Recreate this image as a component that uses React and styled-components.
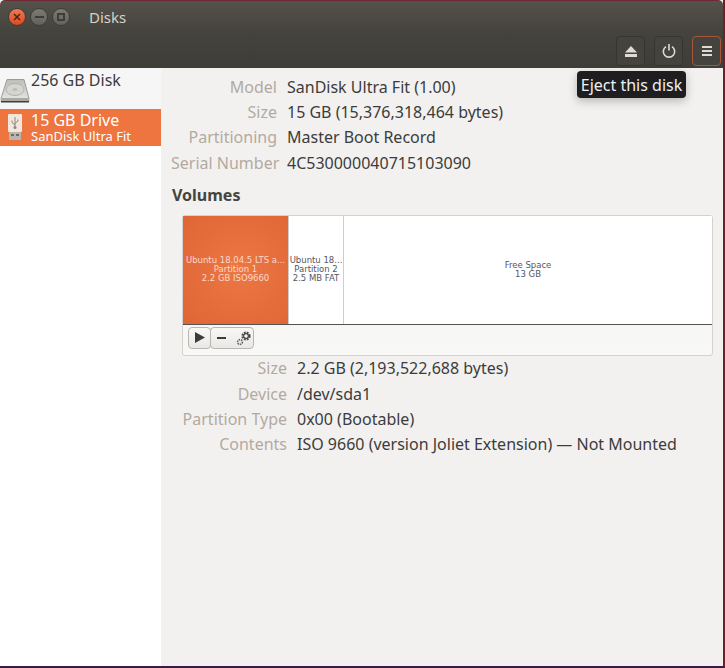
import styled, { createGlobalStyle } from 'styled-components';

const GlobalStyle = createGlobalStyle`
  html, body {
    margin: 0;
    padding: 0;
    background: #fff;
  }
  * {
    box-sizing: border-box;
  }
`;

const driveInfo = [
  ['Model', 'SanDisk Ultra Fit (1.00)'],
  ['Size', '15 GB (15,376,318,464 bytes)'],
  ['Partitioning', 'Master Boot Record'],
  ['Serial Number', '4C530000040715103090'],
];

const volumeInfo = [
  ['Size', '2.2 GB (2,193,522,688 bytes)'],
  ['Device', '/dev/sda1'],
  ['Partition Type', '0x00 (Bootable)'],
  ['Contents', 'ISO 9660 (version Joliet Extension) — Not Mounted'],
];

function HardDiskIcon() {
  return (
    <svg width="30" height="25" viewBox="0 0 30 25">
      <defs>
        <linearGradient id="hdd" x1="0" y1="0" x2="0" y2="1">
          <stop offset="0" stopColor="#bdbdba" />
          <stop offset="1" stopColor="#e2e2df" />
        </linearGradient>
      </defs>
      <path d="M7 .5h17l5 19H1z" fill="url(#hdd)" stroke="#9b9b97" />
      <ellipse cx="15" cy="10.500" rx="9" ry="6" fill="#d4d4d1" stroke="#b0b0ac" />
      <ellipse cx="15" cy="10.500" rx="2.500" ry="1.500" fill="#bcbcb9" />
      <path d="M1 19h28l.5 3.500H.5z" fill="#a9a9a5" />
      <rect x="1" y="22" width="28" height="1.500" fill="#3f3f3d" />
    </svg>
  );
}

function UsbIcon() {
  return (
    <svg width="16" height="27" viewBox="0 0 16 27">
      <rect x="1" y="0" width="14" height="18" rx="1" fill="#f3e6dc" />
      <rect x="2" y="18" width="12" height="8" fill="#b9b6b0" />
      <rect x="4" y="20" width="3" height="2" fill="#6f6c67" />
      <rect x="9" y="20" width="3" height="2" fill="#6f6c67" />
      <path d="M8 3v10M8 11L5 8.500V6.500M8 9.500l3-2.500V5.500" fill="none" stroke="#8b8781" strokeWidth="1" />
      <circle cx="8" cy="13.500" r="1.500" fill="#8b8781" />
    </svg>
  );
}

function EjectIcon() {
  return (
    <svg width="12" height="11" viewBox="0 0 12 11">
      <path d="M6 0l6 6.500H0z" fill="#dfdbd2" />
      <rect y="8" width="12" height="3" fill="#dfdbd2" />
    </svg>
  );
}

function PowerIcon() {
  return (
    <svg width="14" height="14" viewBox="0 0 14 14" fill="none" stroke="#dfdbd2" strokeWidth="1.600">
      <path d="M4 2.600a5.700 5.700 0 1 0 6 0" />
      <path d="M7 0v6.500" />
    </svg>
  );
}

function MenuIcon() {
  return (
    <svg width="10" height="10" viewBox="0 0 10 10" fill="#dfdbd2">
      <rect y="0" width="10" height="2" />
      <rect y="4" width="10" height="2" />
      <rect y="8" width="10" height="2" />
    </svg>
  );
}

function GearsIcon() {
  return (
    <svg width="16" height="16" viewBox="0 0 16 16">
      <circle cx="10" cy="6" r="3.500" fill="none" stroke="#4a4a48" strokeWidth="2.200" strokeDasharray="1.800 1" />
      <circle cx="10" cy="6" r="2.400" fill="none" stroke="#4a4a48" strokeWidth="1.200" />
      <circle cx="4" cy="12" r="2.400" fill="none" stroke="#666" strokeWidth="1.600" strokeDasharray="1.400 .8" />
    </svg>
  );
}

export default function App() {
  return (
    <>
      <GlobalStyle />
      <Window>
        <Header>
          <TitleRow>
            <WindowButtons>
              <CloseButton>
                <svg width="8" height="8" viewBox="0 0 8 8">
                  <path d="M1 1l6 6M7 1l-6 6" stroke="#45231a" strokeWidth="1.500" />
                </svg>
              </CloseButton>
              <WindowButton>
                <Dash />
              </WindowButton>
              <WindowButton>
                <Square />
              </WindowButton>
            </WindowButtons>
            <Title>Disks</Title>
          </TitleRow>
          <Toolbar>
            <ToolButton><EjectIcon /></ToolButton>
            <ToolButton><PowerIcon /></ToolButton>
            <ToolButton $active><MenuIcon /></ToolButton>
          </Toolbar>
        </Header>

        <Body>
          <Sidebar>
            <DiskRow>
              <DiskIcon><HardDiskIcon /></DiskIcon>
              <DiskText>
                <DiskName>256 GB Disk</DiskName>
              </DiskText>
            </DiskRow>
            <DiskRow $selected>
              <DiskIcon><UsbIcon /></DiskIcon>
              <DiskText>
                <DiskName>15 GB Drive</DiskName>
                <DiskSub>SanDisk Ultra Fit</DiskSub>
              </DiskText>
            </DiskRow>
          </Sidebar>

          <Main>
            <InfoGrid $labelWidth={106}>
              {driveInfo.map(([label, value]) => (
                <InfoRow key={label}>
                  <Label>{label}</Label>
                  <Value>{value}</Value>
                </InfoRow>
              ))}
            </InfoGrid>

            <Heading>Volumes</Heading>

            <VolumeCard>
              <VolumeBar>
                <Segment $width={106} $selected>
                  <span>Ubuntu 18.04.5 LTS a...</span>
                  <span>Partition 1</span>
                  <span>2.2 GB ISO9660</span>
                </Segment>
                <Segment $width={55}>
                  <span>Ubuntu 18...</span>
                  <span>Partition 2</span>
                  <span>2.5 MB FAT</span>
                </Segment>
                <FreeSegment>
                  <span>Free Space</span>
                  <span>13 GB</span>
                </FreeSegment>
              </VolumeBar>
              <VolumeTools>
                <MiniButton>
                  <svg width="10" height="11" viewBox="0 0 10 11">
                    <path d="M0 0l10 5.500L0 11z" fill="#3c3c3c" />
                  </svg>
                </MiniButton>
                <MiniGroup>
                  <Minus />
                  <GearsIcon />
                </MiniGroup>
              </VolumeTools>
            </VolumeCard>

            <InfoGrid $labelWidth={116}>
              {volumeInfo.map(([label, value]) => (
                <InfoRow key={label}>
                  <Label>{label}</Label>
                  <Value>{value}</Value>
                </InfoRow>
              ))}
            </InfoGrid>
          </Main>
        </Body>

        <Tooltip>Eject this disk</Tooltip>
      </Window>
    </>
  );
}

const Window = styled.div`
  position: relative;
  display: flex;
  flex-direction: column;
  width: 725px;
  height: 668px;
  overflow: hidden;
  background: #f2f1f0;
  border-right: 2px solid #6d1f2a;
  border-bottom: 2px solid #3d1a45;
  font-family: "Noto Sans", "Open Sans", sans-serif;
`;

const Header = styled.header`
  flex: none;
  height: 68px;
  background: linear-gradient(#55524b, #45433d 46%, #3e3d38);
  border-top: 1px solid #6d2a35;
  border-radius: 5px 5px 0 0;
`;

const TitleRow = styled.div`
  display: flex;
  align-items: center;
  height: 32px;
  padding-left: 8px;
`;

const WindowButtons = styled.div`
  display: flex;
  align-items: center;
  gap: 4px;
`;

const WindowButton = styled.div`
  display: flex;
  align-items: center;
  justify-content: center;
  width: 18px;
  height: 18px;
  border-radius: 50%;
  background: linear-gradient(#7b7a73, #63625b);
  border: 1px solid #3e3d38;
`;

const CloseButton = styled(WindowButton)`
  background: linear-gradient(#f2794f, #dd4a1f);
`;

const Dash = styled.div`
  width: 9px;
  height: 2px;
  background: #3e3d38;
`;

const Square = styled.div`
  width: 8px;
  height: 8px;
  border: 2px solid #3e3d38;
`;

const Title = styled.div`
  margin-left: 19px;
  font-size: 15px;
  color: #d6d2c8;
`;

const Toolbar = styled.div`
  display: flex;
  justify-content: flex-end;
  gap: 9px;
  padding: 3px 2px 0 0;
`;

const ToolButton = styled.button`
  display: flex;
  align-items: center;
  justify-content: center;
  width: 29px;
  height: 30px;
  padding: 0;
  border-radius: 4px;
  background: #45433e;
  border: 1px solid ${(p) => (p.$active ? '#a8563a' : '#36352f')};
`;

const Body = styled.div`
  flex: 1;
  display: flex;
  min-height: 0;
`;

const Sidebar = styled.aside`
  flex: none;
  width: 161px;
  background: #fff;
`;

const DiskRow = styled.div`
  display: flex;
  height: ${(p) => (p.$selected ? '37px' : '41px')};
  padding-top: ${(p) => (p.$selected ? '2px' : '3px')};
  background: ${(p) => (p.$selected ? '#ee7440' : '#f6f6f6')};
  color: ${(p) => (p.$selected ? '#fff' : '#3c3c3c')};
`;

const DiskIcon = styled.div`
  display: flex;
  justify-content: center;
  align-items: flex-end;
  width: 30px;
  padding-bottom: 5px;
`;

const DiskText = styled.div`
  display: flex;
  flex-direction: column;
  margin-left: 1px;
`;

const DiskName = styled.div`
  font-size: 16px;
  line-height: 19px;
`;

const DiskSub = styled.div`
  font-size: 13px;
  line-height: 13px;
`;

const Main = styled.main`
  flex: 1;
  padding: 6px 10px 0 10px;
`;

const InfoGrid = styled.div`
  display: flex;
  flex-direction: column;
  --label-width: ${(p) => p.$labelWidth}px;
`;

const InfoRow = styled.div`
  display: flex;
  gap: 10px;
  height: 25.4px;
  align-items: center;
  font-size: 16px;
`;

const Label = styled.div`
  width: var(--label-width);
  text-align: right;
  color: #b2aaa0;
  white-space: nowrap;
`;

const Value = styled.div`
  color: #3c3c3c;
  white-space: nowrap;
`;

const Heading = styled.h2`
  margin: 8px 0 0 1px;
  font-size: 16px;
  line-height: 22px;
  font-weight: 700;
  color: #45453f;
`;

const VolumeCard = styled.div`
  margin: 9px 0 0 11px;
  width: 531px;
  height: 141px;
  display: flex;
  flex-direction: column;
  background: linear-gradient(#f2f1f0, #f8f8f7);
  border: 1px solid #d4d2ce;
  border-radius: 3px;
`;

const VolumeBar = styled.div`
  flex: none;
  display: flex;
  height: 109px;
  background: #fff;
  border-bottom: 1px solid #55534f;
  font-family: "DejaVu Sans", sans-serif;
  font-size: 8.500px;
  line-height: 9px;
`;

const Segment = styled.div`
  flex: none;
  display: flex;
  flex-direction: column;
  align-items: center;
  justify-content: center;
  width: ${(p) => p.$width}px;
  overflow: hidden;
  white-space: nowrap;
  background: ${(p) => (p.$selected ? 'radial-gradient(circle at 55% 50%, #ec7744, #df6535)' : '#fff')};
  color: ${(p) => (p.$selected ? '#fbd9ca' : '#55555f')};
  border-right: 1px solid #cfcdc9;
`;

const FreeSegment = styled(Segment)`
  flex: 1;
  color: #55555f;
  border-right: 0;
`;

const VolumeTools = styled.div`
  display: flex;
  padding: 2px 0 0 5px;
`;

const MiniButton = styled.div`
  display: flex;
  align-items: center;
  justify-content: center;
  width: 23px;
  height: 22px;
  background: linear-gradient(#f8f8f7, #e9e8e6);
  border: 1px solid #b8b6b1;
  border-radius: 4px;
`;

const MiniGroup = styled(MiniButton)`
  justify-content: flex-start;
  gap: 10px;
  width: 44px;
  padding-left: 6px;
  margin-left: -1px;
`;

const Minus = styled.div`
  width: 9px;
  height: 2px;
  background: #3c3c3c;
`;

const Tooltip = styled.div`
  position: absolute;
  top: 71px;
  left: 577px;
  width: 109px;
  height: 27px;
  display: flex;
  align-items: center;
  justify-content: center;
  background: #1e1e20;
  color: #f0f0f0;
  border-radius: 4px;
  font-size: 16px;
  white-space: nowrap;
  box-shadow: 0 3px 10px rgba(0, 0, 0, 0.25);
`;
